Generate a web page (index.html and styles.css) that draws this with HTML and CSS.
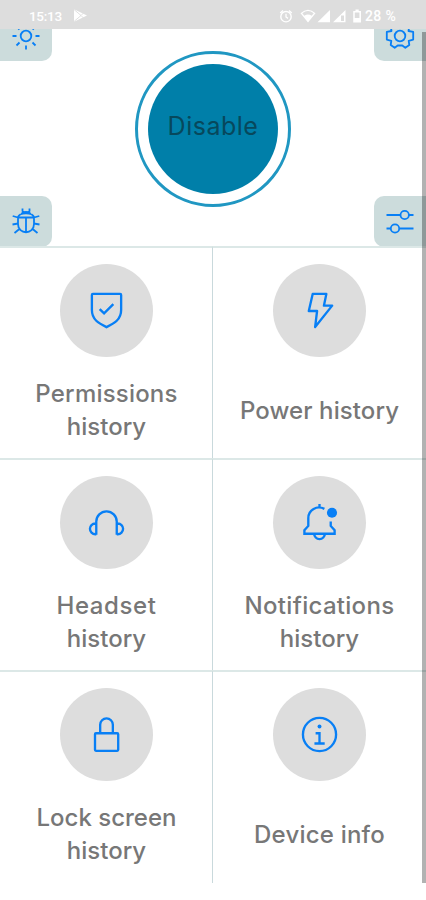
FILE: index.html
```html
<!DOCTYPE html>
<html lang="en">
<head>
<meta charset="utf-8">
<meta name="viewport" content="width=device-width">
<title>Device history</title>
<link rel="stylesheet" href="styles.css">
</head>
<body>
<header class="status">
  <span class="time">15:13</span>
  <svg class="play" width="14" height="14" viewBox="0 0 14 14"><path d="M0 .3 13 6.500 0 12.700Z" fill="#fff"/><path d="M0 .5l7 6-7 6M7 6.500l3-3M7 6.500l3 3" fill="none" stroke="#ddd" stroke-width=".9"/></svg>
  <svg class="system" width="84" height="16" viewBox="279 7 84 16" fill="none" stroke="#fff">
    <circle cx="286" cy="15.700" r="5.200" stroke-width="1.400"/><path d="M286 12.800v3.200l2 1.400M280.200 12l2.800-2.500M291.800 12 289 9.500" stroke-width="1.300"/>
    <path d="M300.500 12.200q7.500-7 15 0L308 21.500Z" fill="#fff" stroke="none"/><path d="M302.300 12.200q5.700-4.300 11.400 0l-2 2.500q-3.700-2.200-7.400 0Z" fill="#ddd" stroke="none"/>
    <path d="M317.500 21.300 330 9v12.300ZM333 21.300 345.500 9v12.300Z" fill="#fff" stroke="none"/><path d="M341 14.500h3v5.500h-3Z" fill="#ddd" stroke="none"/>
    <path d="M354 10.700h6.200v10h-6.200Z" stroke-width="1.500"/><path d="M355.500 8.500h3.200v2h-3.200ZM354 17h6.200v4H354Z" fill="#fff" stroke="none"/>
  </svg>
  <span class="battery">28 %</span>
</header>
<main>
  <section class="hero">
    <div class="side">
      <button class="tab upper" aria-label="Brightness"><svg width="30" height="30" viewBox="0 0 30 30"><circle cx="15" cy="15" r="5.300"/><path d="M15 1.500v4M15 24.500v4M1.500 15h4M24.500 15h4M5.500 5.500l3 3M21.500 21.500l3 3M24.500 5.500l-3 3M8.500 21.500l-3 3"/></svg></button>
      <button class="tab" aria-label="Debug"><svg width="30" height="30" viewBox="0 0 30 30"><path d="M10.500 7.500C11 4 19 4 19.500 7.500M11.500 1.500v2.500l2 1.500M18.500 1.500v2.500l-2 1.500M7 10.500h16M15 10.500V25M7 10.500C8 5 22 5 23 10.500V17c0 11-16 11-16 0ZM7 10.500 1.700 9M23 10.500 28.300 9M7 16.500l-5.500 1M23 16.500l5.500 1M9 21.500l-5.500 4.500M21 21.500l5.500 4.500"/></svg></button>
    </div>
    <button class="power"><span>Disable</span></button>
    <div class="side right">
      <button class="tab upper" aria-label="Settings"><svg width="30" height="30" viewBox="0 0 30 30"><circle cx="15" cy="15" r="5.300"/><path d="m12.800 5-2.500-2-4.500 2.800.7 4.200-4.700.9v7.700l4.500 1.200-.6 4.200 4 2.800 3-2.300h4.600l3 2.300 4-2.800-.6-4.200 4.500-1.200v-7.700l-4.700-.9.700-4.200L19.700 3l-2.500 2Z" stroke-linejoin="round"/></svg></button>
      <button class="tab" aria-label="Options"><svg width="30" height="30" viewBox="0 0 30 30"><path d="M1.500 8h14M24 8h4.500M1.500 21.500H6M14.500 21.500h14"/><circle cx="19.700" cy="8" r="4.200"/><circle cx="10" cy="21.500" r="4.200"/></svg></button>
    </div>
  </section>
  <section class="grid">
    <article class="card">
      <div class="disc"><svg width="40" height="40" viewBox="0 0 40 40"><path d="M5.500 2.500h28q1 0 1 1V19c0 10-7 13.500-15 17.500C11.500 32.500 4.500 29 4.500 19V3.500q0-1 1-1Z"/><path d="m12.500 18 4.500 4.500 9.500-9.500"/></svg></div>
      <h2><span class="permissions">Permissions</span><span>history</span></h2>
    </article>
    <article class="card">
      <div class="disc"><svg width="40" height="40" viewBox="0 0 40 40"><path d="M12.500 2.500h14L24 14.500h8.500L15 36.500 17 20H8.500Z" stroke-linejoin="round"/></svg></div>
      <h2><span class="power-label">Power history</span></h2>
    </article>
    <article class="card">
      <div class="disc"><svg width="40" height="40" viewBox="0 0 40 40"><path d="M9 32V18.500a10.500 10.500 0 0 1 21 0V32M9 20.500H8a5.300 5.300 0 0 0 0 11h1M30 20.500h1a5.300 5.300 0 0 1 0 11h-1"/></svg></div>
      <h2><span class="headset">Headset</span><span>history</span></h2>
    </article>
    <article class="card">
      <div class="disc"><svg width="40" height="40" viewBox="0 0 40 40"><path d="M19.500.500V4M24.500 5.500C17 1.500 8 6.500 8 15v8l-4 4.500v3.500h31v-3.500L31 23v-4.500M14 31a5.500 5.500 0 0 0 11 0"/><circle class="fill" cx="32.300" cy="9.500" r="5.200"/></svg></div>
      <h2><span class="notifications">Notifications</span><span>history</span></h2>
    </article>
    <article class="card">
      <div class="disc"><svg width="40" height="40" viewBox="0 0 40 40"><rect x="7.700" y="18.200" width="23.800" height="18" rx="1"/><path d="M13 18V9.500a6.500 6.500 0 0 1 13 0V18"/></svg></div>
      <h2><span>Lock screen</span><span>history</span></h2>
    </article>
    <article class="card">
      <div class="disc"><svg width="40" height="40" viewBox="0 0 40 40"><circle cx="19.500" cy="19.500" r="17"/><path d="M15.500 18.200h4v10.500M14.300 28.700h10.500"/><circle class="fill" cx="19.500" cy="11.300" r="2"/></svg></div>
      <h2><span class="device">Device info</span></h2>
    </article>
  </section>
</main>
<div class="scrollbar"></div>
</body>
</html>
```

FILE: styles.css
```css
* { box-sizing: border-box; }
body { margin: 0; width: 426px; height: 900px; overflow: hidden; position: relative; background: #fff; font-family: Inter, sans-serif; }
button { border: 0; padding: 0; font: inherit; }
svg { display: block; flex: none; }
.status { height: 29px; background: #ddd; color: #fff; display: flex; align-items: center; padding: 2px 0 0 29px; font: 500 14px/18px Roboto, sans-serif; position: relative; z-index: 1; }
.time { width: 45px; font-size: 13.5px; letter-spacing: -.3px; }
.system { margin-left: 191px; }
.battery { margin-left: 2px; white-space: nowrap; letter-spacing: .4px; }
.hero { height: 218px; display: flex; justify-content: space-between; }
.side { display: flex; flex-direction: column; justify-content: space-between; }
.tab { width: 52px; height: 52px; border-radius: 0 10px 10px 0; background: #ccdcdc; display: grid; place-items: center; }
.right .tab { border-radius: 10px 0 0 10px; }
.upper { margin-top: -20px; }
.side .tab:last-child { height: 51px; padding-top: 1px; }
.tab svg, .disc svg { fill: none; stroke: #087ff5; stroke-width: 2; }
.tab svg { stroke-width: 1.8; }
.upper svg { margin-top: 1px; }
.power { width: 156px; height: 156px; margin-top: 21.5px; border: 3px solid #2097c2; border-radius: 50%; background: #fff; padding: 10px; color: #07485c; font-size: 25px; }
.power span { display: grid; place-items: center; height: 130px; padding-bottom: 5px; border-radius: 50%; background: #007fa9; letter-spacing: .5px; }
.grid { display: grid; grid-template-columns: 213px 213px; grid-template-rows: 212px 212px 213px; margin-top: -1px; }
.card { border-top: 2px solid #dce8e7; padding-top: 16px; display: flex; flex-direction: column; align-items: center; }
.card:nth-child(odd) { border-right: 1px solid #c9d9dc; padding-left: 1px; }
.disc { width: 93px; height: 93px; flex: none; border-radius: 50%; background: #ddd; display: grid; place-items: center; }
.disc svg { width: 39px; height: 39px; stroke-width: 2.4; transform: translate(.5px, .5px); }
.disc .fill { fill: #087ff5; stroke: none; }
h2 { margin: 0; padding-top: 5px; height: 101px; display: flex; flex-direction: column; justify-content: center; align-items: center; font-size: 24px; line-height: 33px; font-weight: 500; color: #777; white-space: nowrap; }
.permissions { letter-spacing: .2px; }
.power-label { letter-spacing: .1px; }
.headset { letter-spacing: .6px; }
.notifications { letter-spacing: .3px; }
.device { letter-spacing: .2px; }
.scrollbar { position: absolute; right: 0; top: 32px; width: 4px; height: 851px; background: rgba(0, 0, 0, .3); z-index: 2; }
```
